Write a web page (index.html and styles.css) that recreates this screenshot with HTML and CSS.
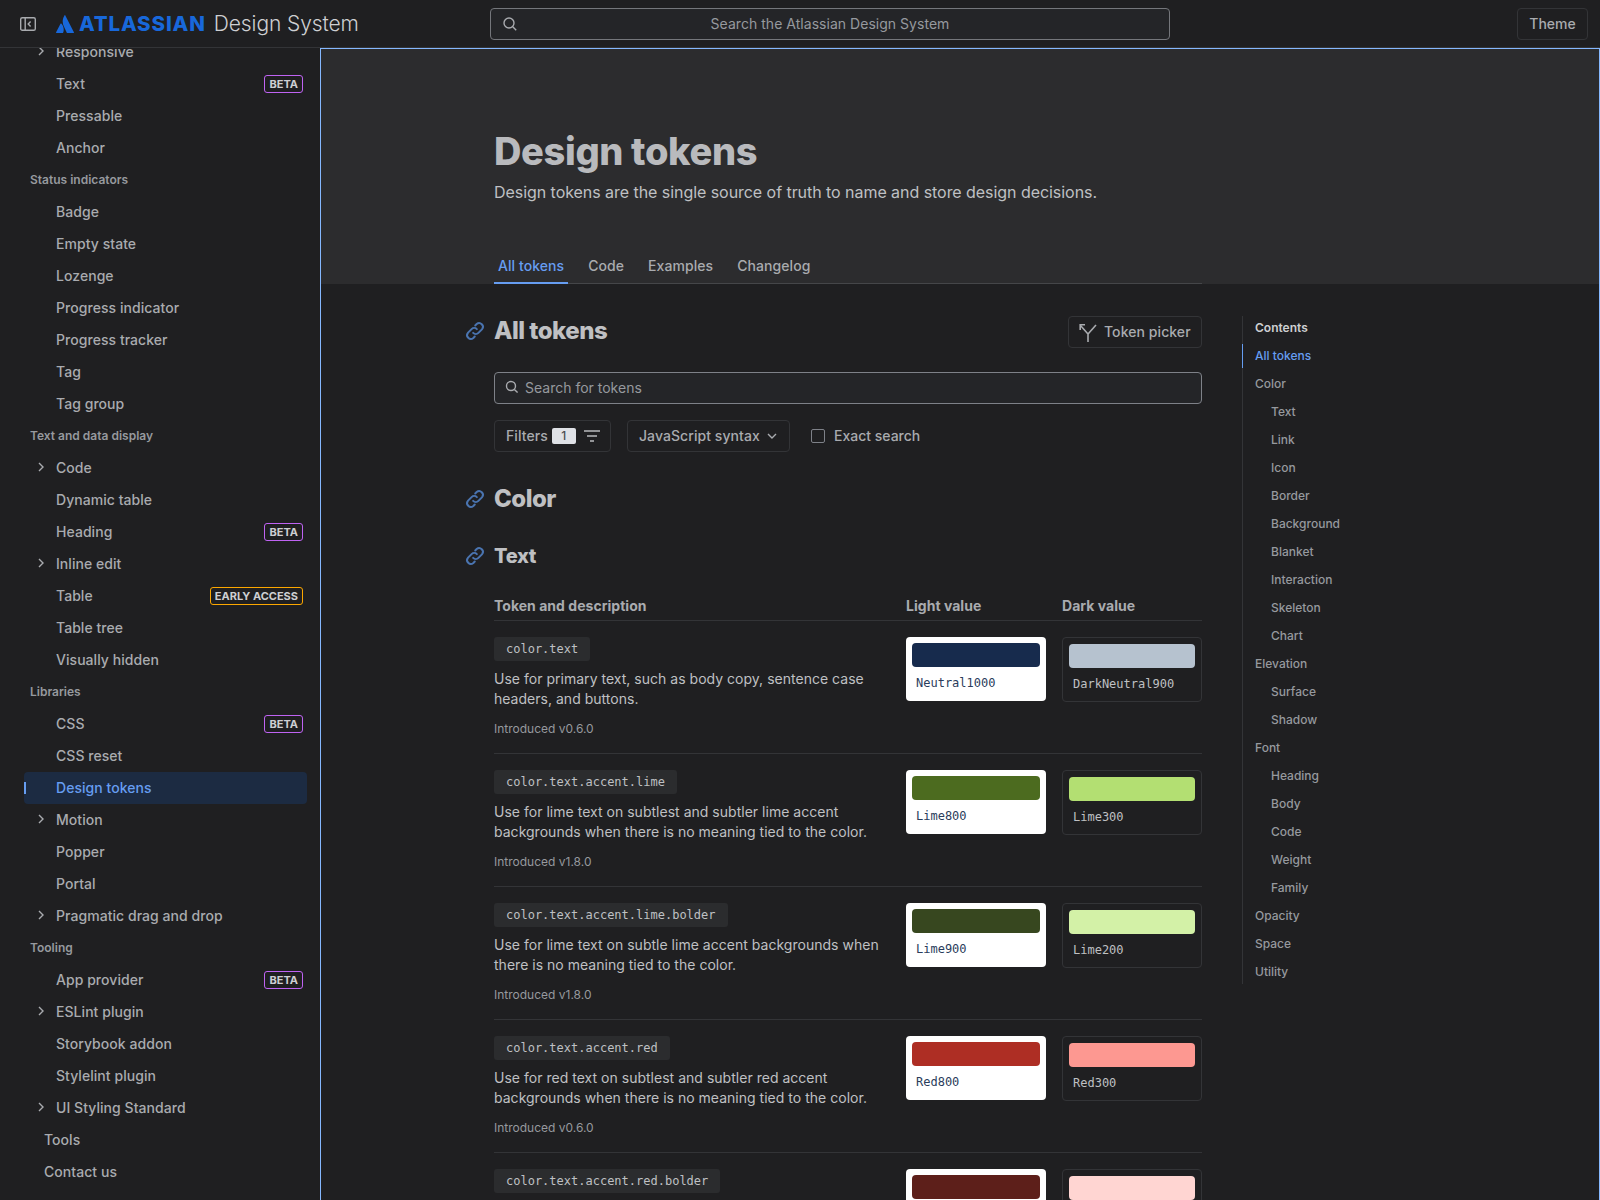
FILE: index.html
```html
<!DOCTYPE html>
<html lang="en">
<head>
    <meta charset="UTF-8">
    <title>Design tokens - Atlassian Design System</title>
    <link rel="stylesheet" href="styles.css">
</head>
<body>
    <header class="topbar">
        <button class="side-toggle" aria-label="Collapse sidebar">
            <svg width="16" height="16" viewBox="0 0 16 16" fill="none" stroke="#a9abaf" stroke-width="1.4"><rect x="0.7" y="1.7" width="14.6" height="12.6" rx="1.6"/><path d="M5.2 2v12"/><path d="M10.6 5.6 8.2 8l2.4 2.4"/></svg>
        </button>
        <a class="logo">
            <svg width="18" height="18" viewBox="0 0 18 18" fill="#1868db"><path d="M5.3 8.6c-.2-.3-.6-.2-.8.1L.1 17.2c-.2.4.1.8.5.8h6c.2 0 .4-.1.5-.3 1.300-2.700.5-6.700-1.800-9.100z"/><path d="M8.500.4C6.100 4.200 6.300 8.400 7.900 11.600l2.900 6.100c.1.200.3.300.5.300h6.100c.4 0 .7-.4.500-.8L9.300.4c-.2-.4-.6-.4-.8 0z"/></svg>
            <span class="logo-name">ATLASSIAN</span>
            <span class="logo-product">Design System</span>
        </a>
        <div class="top-search">
            <svg class="top-search-icon" width="16" height="16" viewBox="0 0 16 16" fill="none" stroke="#a9abaf" stroke-width="1.4"><circle cx="7" cy="7" r="5"/><path d="m10.800 10.800 3.400 3.400"/></svg>
            Search the Atlassian Design System
        </div>
        <button class="theme-btn">Theme</button>
    </header>

    <div class="app">
        <nav class="sidebar">
            <div class="nav-list">
                <a class="nav-row"><svg class="chev" width="16" height="16" viewBox="0 0 16 16" fill="none" stroke="#a9abaf" stroke-width="1.400"><path d="m6 4 4 4-4 4"/></svg>Responsive</a>
                <a class="nav-row">Text<span class="badge">BETA</span></a>
                <a class="nav-row">Pressable</a>
                <a class="nav-row">Anchor</a>
                <div class="nav-group">Status indicators</div>
                <a class="nav-row">Badge</a>
                <a class="nav-row">Empty state</a>
                <a class="nav-row">Lozenge</a>
                <a class="nav-row">Progress indicator</a>
                <a class="nav-row">Progress tracker</a>
                <a class="nav-row">Tag</a>
                <a class="nav-row">Tag group</a>
                <div class="nav-group">Text and data display</div>
                <a class="nav-row"><svg class="chev" width="16" height="16" viewBox="0 0 16 16" fill="none" stroke="#a9abaf" stroke-width="1.400"><path d="m6 4 4 4-4 4"/></svg>Code</a>
                <a class="nav-row">Dynamic table</a>
                <a class="nav-row">Heading<span class="badge">BETA</span></a>
                <a class="nav-row"><svg class="chev" width="16" height="16" viewBox="0 0 16 16" fill="none" stroke="#a9abaf" stroke-width="1.400"><path d="m6 4 4 4-4 4"/></svg>Inline edit</a>
                <a class="nav-row">Table<span class="badge badge-early">EARLY ACCESS</span></a>
                <a class="nav-row">Table tree</a>
                <a class="nav-row">Visually hidden</a>
                <div class="nav-group">Libraries</div>
                <a class="nav-row">CSS<span class="badge">BETA</span></a>
                <a class="nav-row">CSS reset</a>
                <a class="nav-row selected">Design tokens</a>
                <a class="nav-row"><svg class="chev" width="16" height="16" viewBox="0 0 16 16" fill="none" stroke="#a9abaf" stroke-width="1.400"><path d="m6 4 4 4-4 4"/></svg>Motion</a>
                <a class="nav-row">Popper</a>
                <a class="nav-row">Portal</a>
                <a class="nav-row"><svg class="chev" width="16" height="16" viewBox="0 0 16 16" fill="none" stroke="#a9abaf" stroke-width="1.400"><path d="m6 4 4 4-4 4"/></svg>Pragmatic drag and drop</a>
                <div class="nav-group">Tooling</div>
                <a class="nav-row">App provider<span class="badge">BETA</span></a>
                <a class="nav-row"><svg class="chev" width="16" height="16" viewBox="0 0 16 16" fill="none" stroke="#a9abaf" stroke-width="1.400"><path d="m6 4 4 4-4 4"/></svg>ESLint plugin</a>
                <a class="nav-row">Storybook addon</a>
                <a class="nav-row">Stylelint plugin</a>
                <a class="nav-row"><svg class="chev" width="16" height="16" viewBox="0 0 16 16" fill="none" stroke="#a9abaf" stroke-width="1.400"><path d="m6 4 4 4-4 4"/></svg>UI Styling Standard</a>
                <a class="nav-row nav-top">Tools</a>
                <a class="nav-row nav-top">Contact us</a>
            </div>
        </nav>

        <main class="main">
            <section class="hero">
                <div class="hero-inner">
                    <h1>Design tokens</h1>
                    <p class="lead">Design tokens are the single source of truth to name and store design decisions.</p>
                    <div class="tabs">
                        <a class="tab active">All tokens</a>
                        <a class="tab">Code</a>
                        <a class="tab">Examples</a>
                        <a class="tab">Changelog</a>
                    </div>
                </div>
            </section>

            <div class="body-wrap">
                <div class="content">
                    <div class="title-row">
                        <h2><svg class="anchor-icon" width="22" height="22" viewBox="0 0 20 20" fill="none" stroke="#4a74b0" stroke-width="1.800" stroke-linecap="round"><path d="M8.300 11.700a3.400 3.400 0 0 0 4.800 0l3.200-3.200a3.400 3.400 0 0 0-4.800-4.800l-1.300 1.300"/><path d="M11.700 8.300a3.400 3.400 0 0 0-4.800 0l-3.200 3.200a3.400 3.400 0 0 0 4.800 4.800l1.300-1.300"/></svg>All tokens</h2>
                        <button class="btn picker-btn">
                            <svg width="20" height="20" viewBox="0 0 20 20" fill="none" stroke="#a9abaf" stroke-width="1.600"><path d="M10 20v-8L2.500 3.500"/><path d="M2.200 8V2.800H7"/><path d="M10 12l8-9"/></svg>
                            Token picker
                        </button>
                    </div>

                    <div class="token-search">
                        <svg width="16" height="16" viewBox="0 0 16 16" fill="none" stroke="#a9abaf" stroke-width="1.400"><circle cx="7" cy="7" r="4.500"/><path d="m10.400 10.400 3.200 3.200"/></svg>
                        Search for tokens
                    </div>

                    <div class="filters">
                        <button class="btn filter-btn">Filters <span class="count">1</span>
                            <svg width="16" height="14" viewBox="0 0 16 14" fill="none" stroke="#b9babd" stroke-width="1.500"><path d="M0 2h16M3 7h10M6 12h4"/></svg>
                        </button>
                        <button class="btn syntax-btn">JavaScript syntax
                            <svg width="12" height="12" viewBox="0 0 12 12" fill="none" stroke="#a9abaf" stroke-width="1.400"><path d="m2 4 4 4 4-4"/></svg>
                        </button>
                        <label class="check"><span class="box"></span>Exact search</label>
                    </div>

                    <h2 class="section-head"><svg class="anchor-icon" width="22" height="22" viewBox="0 0 20 20" fill="none" stroke="#4a74b0" stroke-width="1.800" stroke-linecap="round"><path d="M8.300 11.700a3.400 3.400 0 0 0 4.800 0l3.200-3.200a3.400 3.400 0 0 0-4.800-4.800l-1.300 1.300"/><path d="M11.700 8.300a3.400 3.400 0 0 0-4.800 0l-3.200 3.200a3.400 3.400 0 0 0 4.800 4.800l1.300-1.300"/></svg>Color</h2>
                    <h3 class="sub-head"><svg class="anchor-icon" width="22" height="22" viewBox="0 0 20 20" fill="none" stroke="#4a74b0" stroke-width="1.800" stroke-linecap="round"><path d="M8.300 11.700a3.400 3.400 0 0 0 4.800 0l3.200-3.200a3.400 3.400 0 0 0-4.800-4.800l-1.300 1.300"/><path d="M11.700 8.300a3.400 3.400 0 0 0-4.800 0l-3.200 3.200a3.400 3.400 0 0 0 4.800 4.800l1.300-1.300"/></svg>Text</h3>

                    <div class="token-head">
                        <div class="col-desc">Token and description</div>
                        <div class="col-light">Light value</div>
                        <div class="col-dark">Dark value</div>
                    </div>

                    <div class="token-row">
                        <div class="col-desc">
                            <code class="chip">color.text</code>
                            <p class="desc">Use for primary text, such as body copy, sentence case headers, and buttons.</p>
                            <p class="since">Introduced v0.6.0</p>
                        </div>
                        <div class="col-light"><div class="card card-light"><div class="swatch" style="background:#172b4d"></div><code>Neutral1000</code></div></div>
                        <div class="col-dark"><div class="card card-dark"><div class="swatch" style="background:#b6c2cf"></div><code>DarkNeutral900</code></div></div>
                    </div>

                    <div class="token-row">
                        <div class="col-desc">
                            <code class="chip">color.text.accent.lime</code>
                            <p class="desc">Use for lime text on subtlest and subtler lime accent backgrounds when there is no meaning tied to the color.</p>
                            <p class="since">Introduced v1.8.0</p>
                        </div>
                        <div class="col-light"><div class="card card-light"><div class="swatch" style="background:#4c6b1f"></div><code>Lime800</code></div></div>
                        <div class="col-dark"><div class="card card-dark"><div class="swatch" style="background:#b3df72"></div><code>Lime300</code></div></div>
                    </div>

                    <div class="token-row">
                        <div class="col-desc">
                            <code class="chip">color.text.accent.lime.bolder</code>
                            <p class="desc">Use for lime text on subtle lime accent backgrounds when there is no meaning tied to the color.</p>
                            <p class="since">Introduced v1.8.0</p>
                        </div>
                        <div class="col-light"><div class="card card-light"><div class="swatch" style="background:#37471f"></div><code>Lime900</code></div></div>
                        <div class="col-dark"><div class="card card-dark"><div class="swatch" style="background:#d3f1a7"></div><code>Lime200</code></div></div>
                    </div>

                    <div class="token-row">
                        <div class="col-desc">
                            <code class="chip">color.text.accent.red</code>
                            <p class="desc">Use for red text on subtlest and subtler red accent backgrounds when there is no meaning tied to the color.</p>
                            <p class="since">Introduced v0.6.0</p>
                        </div>
                        <div class="col-light"><div class="card card-light"><div class="swatch" style="background:#ae2e24"></div><code>Red800</code></div></div>
                        <div class="col-dark"><div class="card card-dark"><div class="swatch" style="background:#fd9891"></div><code>Red300</code></div></div>
                    </div>

                    <div class="token-row">
                        <div class="col-desc">
                            <code class="chip">color.text.accent.red.bolder</code>
                            <p class="desc">Use for red text on subtle red accent backgrounds when there is no meaning tied to the color.</p>
                            <p class="since">Introduced v0.6.0</p>
                        </div>
                        <div class="col-light"><div class="card card-light"><div class="swatch" style="background:#5d1f1a"></div><code>Red900</code></div></div>
                        <div class="col-dark"><div class="card card-dark"><div class="swatch" style="background:#ffd5d2"></div><code>Red200</code></div></div>
                    </div>
                </div>

                <aside class="toc">
                    <div class="toc-title">Contents</div>
                    <a class="toc-item active">All tokens</a>
                    <a class="toc-item">Color</a>
                    <a class="toc-item toc-sub">Text</a>
                    <a class="toc-item toc-sub">Link</a>
                    <a class="toc-item toc-sub">Icon</a>
                    <a class="toc-item toc-sub">Border</a>
                    <a class="toc-item toc-sub">Background</a>
                    <a class="toc-item toc-sub">Blanket</a>
                    <a class="toc-item toc-sub">Interaction</a>
                    <a class="toc-item toc-sub">Skeleton</a>
                    <a class="toc-item toc-sub">Chart</a>
                    <a class="toc-item">Elevation</a>
                    <a class="toc-item toc-sub">Surface</a>
                    <a class="toc-item toc-sub">Shadow</a>
                    <a class="toc-item">Font</a>
                    <a class="toc-item toc-sub">Heading</a>
                    <a class="toc-item toc-sub">Body</a>
                    <a class="toc-item toc-sub">Code</a>
                    <a class="toc-item toc-sub">Weight</a>
                    <a class="toc-item toc-sub">Family</a>
                    <a class="toc-item">Opacity</a>
                    <a class="toc-item">Space</a>
                    <a class="toc-item">Utility</a>
                </aside>
            </div>
        </main>
    </div>
</body>
</html>
```

FILE: styles.css
```css
* { box-sizing: border-box; }
html, body { height: 100%; }
body { margin: 0; height: 1200px; overflow: hidden; background: #1f1f21; color: #cecfd2; font-family: Inter, "Liberation Sans", sans-serif; font-size: 14px; }
button { font-family: inherit; }
h1, h2, h3, p { margin: 0; }
code { font-family: "DejaVu Sans Mono", "Liberation Mono", monospace; }

/* top bar */
.topbar { display: flex; align-items: center; height: 48px; padding: 0 12px 0 20px; border-bottom: 1px solid #333437; }
.side-toggle { display: flex; width: 16px; height: 16px; padding: 0; margin-right: 20px; border: none; background: none; }
.logo { display: flex; align-items: center; width: 434px; }
.logo-name { margin-left: 5px; color: #1868db; font-size: 20.5px; font-weight: 800; letter-spacing: 0.85px; }
.logo-product { margin-left: 8px; color: #cecfd2; font-size: 21px; font-weight: 300; letter-spacing: -0.1px; }
.top-search { position: relative; width: 680px; height: 32px; line-height: 30px; text-align: center; color: #96999e; background: #242528; border: 1px solid #74767b; border-radius: 4px; letter-spacing: 0.03px; }
.top-search-icon { position: absolute; left: 11px; top: 7px; }
.theme-btn { margin-left: auto; width: 71px; height: 32px; padding: 0; color: #a9abaf; font-size: 14px; font-weight: 500; background: none; border: 1px solid #333437; border-radius: 4px; }

.app { display: flex; height: 1152px; }

/* sidebar */
.sidebar { flex: none; width: 320px; padding: 0 13px 0 24px; overflow: hidden; }
.nav-list { margin-top: -12px; }
.nav-row { position: relative; display: flex; align-items: center; height: 32px; padding: 0 4px 2px 32px; color: #a9abaf; font-weight: 500; letter-spacing: 0.05px; }
.nav-top { padding-left: 20px; }
.chev { flex: none; margin: 0 7px 0 -23px; }
.nav-group { display: flex; align-items: center; height: 32px; padding: 0 0 2px 6px; color: #96999e; font-size: 12px; font-weight: 600; }
.selected { color: #669df1; background: #1c2b42; border-radius: 4px; }
.selected::before { content: ""; position: absolute; left: 0; top: 10px; width: 2px; height: 12px; background: #669df1; }
.badge { margin: 2px 0 0 auto; height: 18px; padding: 0 4px; line-height: 16px; color: #cecfd2; font-size: 11px; font-weight: 700; letter-spacing: 0; border: 1px solid #bf63f3; border-radius: 3px; }
.badge-early { border-color: #fca700; }

/* main panel */
.main { flex: 1; min-width: 0; overflow: hidden; border: 1px solid #85b8ff; border-bottom: none; }
.hero { height: 235px; padding-left: 173px; background: #2c2c2e; }
.hero-inner { width: 708px; height: 235px; padding-top: 78px; border-bottom: 1px solid #454649; }
h1 { color: #b9babd; font-size: 38px; line-height: 48px; font-weight: 800; letter-spacing: -0.35px; }
.lead { margin-top: 5px; font-size: 16px; line-height: 24px; color: #bfc0c3; letter-spacing: -0.05px; }
.tabs { display: flex; gap: 16px; margin-top: 46px; }
.tab { height: 34px; padding: 0 4px; line-height: 32px; color: #a9abaf; font-weight: 500; letter-spacing: 0.07px; }
.tab.active { color: #669df1; border-bottom: 2px solid #669df1; }

.body-wrap { display: flex; padding-left: 173px; }
.content { flex: none; width: 708px; padding-top: 32px; }

.anchor-icon { position: absolute; left: -30px; top: 50%; margin-top: -11px; }
.title-row { display: flex; justify-content: space-between; align-items: center; height: 32px; }
h2, h3 { position: relative; color: #bfc0c3; font-weight: 800; }
h2 { font-size: 24px; line-height: 32px; letter-spacing: -0.5px; }
h3 { font-size: 20px; line-height: 28px; letter-spacing: -0.33px; }
.title-row h2 { top: -1px; }

.btn { display: flex; align-items: center; height: 32px; padding-bottom: 2px; color: #a9abaf; font-size: 14px; font-weight: 500; letter-spacing: 0.07px; background: none; border: 1px solid #333437; border-radius: 4px; }
.btn svg { margin-top: 2px; }
.picker-btn { gap: 6px; width: 134px; padding: 0 9px 2px; }

.token-search { display: flex; align-items: center; gap: 5px; height: 32px; margin-top: 24px; padding: 0 0 2px 9px; color: #96999e; background: #242528; border: 1px solid #7e8188; border-radius: 4px; }
.filters { display: flex; align-items: center; height: 32px; margin-top: 16px; }
.filter-btn { width: 117px; padding: 0 0 2px 11px; gap: 4px; }
.count { flex: none; width: 24px; height: 16px; margin-top: 2px; line-height: 16px; text-align: center; color: #4b4d51; font-size: 12px; background: #dfe1e6; border-radius: 2px; }
.filter-btn svg { flex: none; margin-left: 4px; }
.syntax-btn { gap: 6px; width: 163px; margin-left: 16px; padding: 0 0 2px 11px; }
.check { display: flex; align-items: center; gap: 9px; margin-left: 21px; padding-bottom: 2px; color: #a9abaf; font-weight: 500; }
.box { width: 14px; height: 14px; margin-top: 1px; border: 1px solid #7e8188; border-radius: 2px; }

.section-head { margin-top: 31px; }
.sub-head { margin-top: 27px; }

/* token table */
.token-head { display: flex; margin-top: 22px; height: 29px; padding-top: 5px; color: #a9abaf; font-weight: 700; letter-spacing: 0.03px; border-bottom: 1px solid #333437; }
.col-desc { flex: none; width: 412px; }
.col-light { flex: none; width: 156px; }
.col-dark { flex: none; width: 140px; }
.token-row { display: flex; height: 133px; padding-top: 16px; border-bottom: 1px solid #333437; }
.chip { display: inline-block; height: 24px; padding: 0 12px; line-height: 24px; color: #bfc0c3; font-size: 12px; background: #2b2c2e; border-radius: 3px; }
.desc { margin-top: 8px; width: 392px; line-height: 20px; color: #bfc0c3; letter-spacing: 0.02px; }
.since { margin-top: 11px; font-size: 12px; line-height: 18px; color: #96999e; }
.card { width: 140px; height: 64px; padding: 6px; border-radius: 4px; }
.card code { display: block; margin: 8px 0 0 4px; font-size: 12px; line-height: 16px; }
.card-light { background: #fff; color: #2a3c5b; }
.card-dark { height: 65px; color: #bfc0c3; border: 1px solid #333437; }
.swatch { height: 24px; border-radius: 4px; }

/* contents */
.toc { flex: none; width: 200px; margin: 32px 0 0 40px; height: 668px; padding-left: 0; border-left: 1px solid #333437; }
.toc-title { height: 26px; line-height: 24px; padding-left: 12px; color: #cecfd2; font-size: 12px; font-weight: 600; }
.toc-item { display: block; height: 28px; line-height: 28px; padding-left: 12px; color: #96999e; font-size: 12px; font-weight: 500; }
.toc-sub { padding-left: 28px; }
.toc-item.active { height: 24px; line-height: 24px; margin: 2px 0 2px -1px; padding-left: 12px; color: #669df1; border-left: 1px solid #669df1; }
```
